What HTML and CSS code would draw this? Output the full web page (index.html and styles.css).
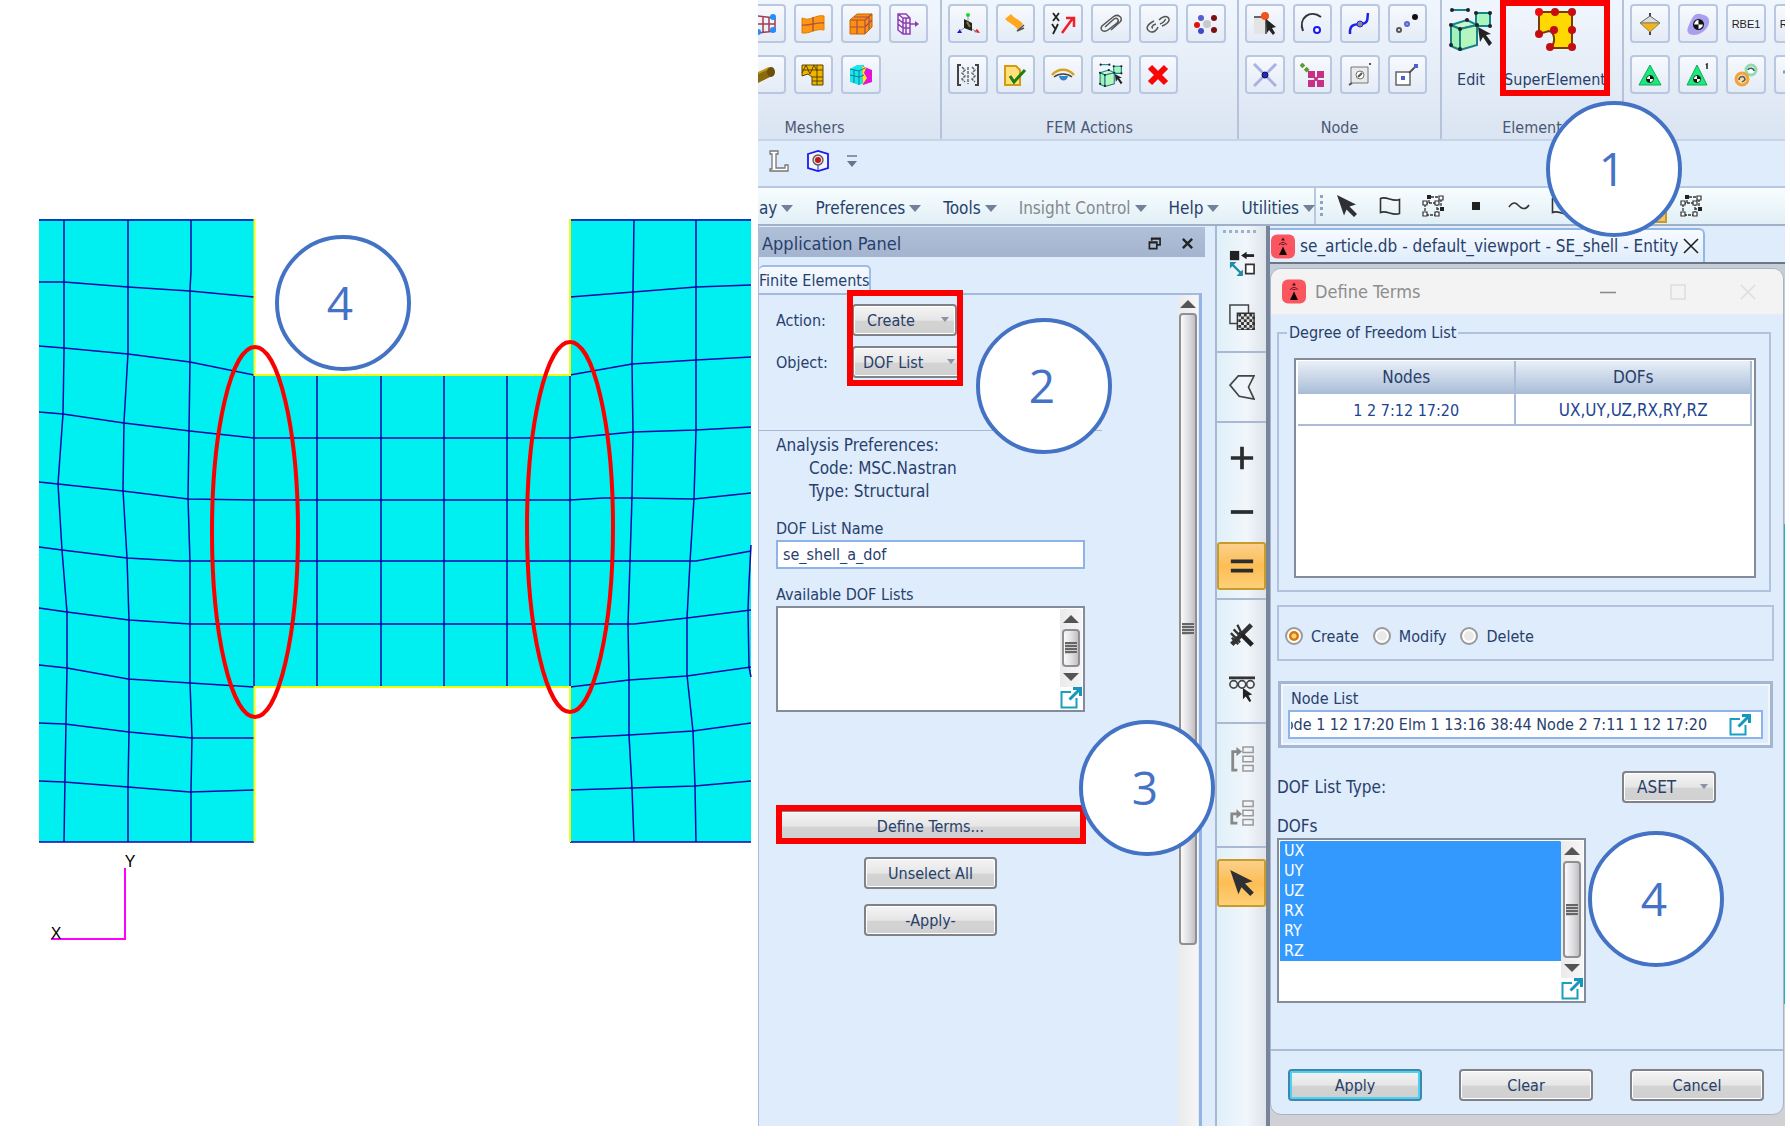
FILE: index.html
```html
<!DOCTYPE html>
<html lang="en">
<head>
<meta charset="utf-8">
<title>Superelement DOF list definition</title>
<link rel="stylesheet" href="styles.css">
</head>
<body>
<svg class="defs" aria-hidden="true">
  <defs>
    <symbol id="popout" viewBox="0 0 22 22"><path d="M11 5H1.500V20.500H16.500V11" fill="none" stroke="#1a9fc0" stroke-width="2"/><path d="M9.500 12.500 19 3M13 1.500h7.500V9" fill="none" stroke="#1597bb" stroke-width="3"/></symbol>
    <symbol id="logo" viewBox="0 0 24 24"><rect width="24" height="24" rx="6" fill="#fb5560"/><path d="M12 3l2 3h-4zM9.500 7.500h5l1.500 3H8z" fill="#4a1216"/><path d="M9 8l6 2M15 8l-6 2" stroke="#fb5560"/><path d="M12 12l4 8.500H8z" fill="#140406"/></symbol>
    <symbol id="cursor" viewBox="0 0 22 22"><path d="M1 0 20 9.500 13.500 11.500 21 19 18 22 10.500 14.500 8 20.500z" fill="#2e3033"/></symbol>
    <symbol id="flag" viewBox="0 0 22 22"><path d="M1.500 3.500c6-3 12 4 19 1v14c-7 3-13-4-19-1z" fill="none" stroke="#333" stroke-width="1.600"/></symbol>
    <symbol id="nodes" viewBox="0 0 22 22"><path d="M3 8h12v12H3zM7 8V2h12v12h-4" fill="none" stroke="#333" stroke-width="1.300" stroke-dasharray="3 1"/><g fill="#fff" stroke="#333" stroke-width="1.200"><path d="M1 6h4v4H1zM13 6h4v4h-4zM1 17h4v4H1zM13 17h4v4h-4zM17 1h4v4h-4z"/></g><path d="M5 0h4v4H5zM18 12h4v4h-4z" fill="#222"/></symbol>
    <symbol id="cell-edit" viewBox="0 0 44 44"><g stroke="#17828a" stroke-width="2"><path d="M2 18 18 13 28 18 11 22z" fill="#c9f7d0"/><path d="M2 18v21l9 4V22z" fill="#a5f0b4"/><path d="M11 22l17-4v20l-17 5z" fill="#b5f5be"/><path d="M27 6h14v13H27z" fill="#a8f5c0"/><path d="M3 3h16"/></g><g fill="#222"><circle cx="2" cy="18" r="2"/><circle cx="18" cy="13" r="2"/><circle cx="28" cy="18" r="2"/><circle cx="11" cy="22" r="2"/><circle cx="2" cy="38" r="2"/><circle cx="11" cy="42" r="2"/><circle cx="27" cy="6" r="2"/><circle cx="41" cy="6" r="2"/><circle cx="41" cy="19" r="2"/><circle cx="3" cy="3" r="2"/><circle cx="19" cy="3" r="2"/><path d="M29 20l13 7-5 1 6 8-3 3-6-9-3 5z"/></g></symbol>
    <symbol id="mass" viewBox="0 0 10 10"><circle cx="5" cy="5" r="4.500" fill="#fff" stroke="#111"/><path d="M5 5V.5A4.500 4.500 0 0 1 9.500 5zM5 5v4.500A4.500 4.500 0 0 1 .5 5z" fill="#111"/></symbol>
  </defs>
</svg>

<main class="page">
  <figure class="mesh">
    <svg class="mesh-plot" viewBox="0 0 758 1136" role="img" aria-label="Shell mesh with the two connection edges circled">
      <path class="shell" d="M39 219H254V375H570V219H751V842H570V687H254V842H39z"/>
      <g class="grid">
        <path d="M39 220H254M570 220H751M39 842H254M570 842H751"/>
        <path d="M64 220V353L63 414 58 484 62 550 66 600 67 612V668L65 777 64 842"/>
        <path d="M128 220V353L124 422 123 490 127 558 129 620V732L128 787V842"/>
        <path d="M191 220V271L190 290V362L189 432 188 498 190 562V683L192 737 191 790V842"/>
        <path d="M254 375V687M317 375V687M381 375V687M444 375V687M507 375V687M570 375V687"/>
        <path d="M634 220 633 292 632 363 633 432 632 497 630 562 628 624 629 680V735L632 788 634 842"/>
        <path d="M696 220V432L694 498 690 562 687 618V675L693 731 695 786 696 842"/>
        <path d="M751 545 749 583 748 610 749 667 751 677"/>
        <path d="M39 282H64L128 287 190 291 254 297M570 297 633 292 696 287 751 285"/>
        <path d="M39 346 64 348 128 354 190 362 254 375M570 375 632 364 696 360 751 357"/>
        <path d="M39 412 63 414 124 423 190 431 254 438H570L633 432 696 430 751 427"/>
        <path d="M39 482 58 484 123 491 188 499 254 500H570L603 498H632L694 499 751 493"/>
        <path d="M39 547 62 550 127 558 180 561H696L751 551"/>
        <path d="M39 608 67 612 129 620 190 624H634L687 618 751 610"/>
        <path d="M39 665 67 668 128 679 190 683 254 687M570 687 629 680 687 676 751 667"/>
        <path d="M39 723 65 724 129 732 192 738H254M570 738 629 735 693 731 751 723"/>
        <path d="M39 781 64 782 128 787 190 792 254 790M570 790 632 788 695 786 751 781"/>
      </g>
      <path class="free-edge" d="M254.500 219V375H570V219M254.500 842V687H570V842"/>
      <path class="axes" d="M125 868V939H51"/>
      <text class="axis-name" x="130" y="867">Y</text>
      <text class="axis-name" x="56" y="939">X</text>
      <ellipse class="ring" cx="255" cy="532" rx="43" ry="185"/>
      <ellipse class="ring" cx="570" cy="527" rx="43" ry="185"/>
      <circle class="step-ring" cx="343" cy="303" r="66"/>
      <text class="step-text" x="340" y="320">4</text>
    </svg>
  </figure>

  <section class="app">
    <header class="ribbon">
      <div class="group group-meshers">
        <div class="tiles tiles-4">
          <button class="tile" aria-label="Mesh surface"><svg viewBox="0 0 24 24"><path d="M3 4l18 2v13L3 21zM3 12h18M9 4v16M15 5v15" fill="none" stroke="#a33c4e" stroke-width="1.500"/><g fill="#1e90ff"><circle cx="19" cy="5" r="3"/><circle cx="19" cy="18" r="3"/><circle cx="4" cy="20" r="3"/></g></svg></button>
          <button class="tile" aria-label="Surface mesh"><svg viewBox="0 0 24 24"><path d="M1 6c8 4 14-4 22-2v14c-8-2-14 4-22 3z" fill="#ff9716" stroke="#e07c00"/><path d="M1 13c8 1 14-3 22-2M12 5v14" fill="none" stroke="#b5553a" stroke-width="1.500"/></svg></button>
          <button class="tile" aria-label="Solid mesh"><svg viewBox="0 0 24 24"><path d="M1 8 8 2h15v13l-7 7H1z" fill="#ff8f0f" stroke="#c46508"/><path d="M1 8h15l7-6M16 8v14M1 15h15l7-7M8 8v14M5 5h15v13" fill="none" stroke="#a3504a" stroke-width="1.200"/></svg></button>
          <button class="tile" aria-label="Sweep"><svg viewBox="0 0 24 24"><g fill="none" stroke="#8e3fb0" stroke-width="1.500"><path d="M2 2h8l4 4v16H7l-5-4zM2 2l5 4h7M7 6v16M2 7l5 4h7M2 12l5 4h7M10 6v16"/><path d="M14 12h7"/></g><path d="M19 9l4 3-4 3z" fill="#8e3fb0"/></svg></button>
          <button class="tile" aria-label="Beam mesh"><svg viewBox="0 0 24 24"><path d="M0 12 15 5c5-1 7 5 3 8L4 20H0z" fill="#8a6a0c"/><path d="M0 12l15-7" stroke="#c09a20" stroke-width="2"/><ellipse cx="17" cy="9" rx="4" ry="5" fill="#6b5108"/></svg></button>
          <button class="tile" aria-label="Mesh on mesh"><svg viewBox="0 0 24 24"><path d="M1 2h21v20H11v-8L7 11l-6 2z" fill="#f0b400" stroke="#5b4600"/><path d="M1 7h21M11 14h11M11 18h11M16 2v20M1 10l4-8 4 9 4-9 3 6" fill="none" stroke="#5b4600"/></svg></button>
          <button class="tile" aria-label="Hex mesh"><svg viewBox="0 0 24 24"><path d="M1 6l7-4h7l1 18-6 2-9-3z" fill="#17e6ee"/><path d="M13 3l10 4v12l-9 3z" fill="#e312d8"/><path d="M13 3l4 2-2 5 3 5-4 6z" fill="#f6ea17"/><path d="M1 6l9 2 6-3M10 8v14M1 12l9 2 5-2M5 7v13" fill="none" stroke="#117c8a"/></svg></button>
        </div>
        <span class="group-name">Meshers</span>
      </div>
      <div class="group group-fem">
        <div class="tiles tiles-6">
          <button class="tile" aria-label="Coordinate frame"><svg viewBox="0 0 24 24"><path d="M8 7l8 4v8l-8-3z" fill="#222"/><path d="M11 10l3 5" stroke="#887c30" stroke-width="2"/><circle cx="12" cy="3" r="2" fill="#15d827"/><path d="M1 21l3-4 2 4z" fill="#1414e6"/><path d="M18 20l3-3 3 4z" fill="#e81414"/><path d="M12 4v5M8 16l-4 3M16 17l5 3" stroke="#999"/></svg></button>
          <button class="tile" aria-label="Flag"><svg viewBox="0 0 24 24"><path d="M2 7 8 2c5 6 8 5 12 10l-5 6C11 12 7 12 2 7z" fill="#ffa81f"/><path d="M21 13l-7 6 7-3" fill="none" stroke="#555" stroke-width="1.500"/></svg></button>
          <button class="tile" aria-label="Renumber axes"><svg class="wide" viewBox="0 0 28 24"><path d="M4 1l6 8M10 1 4 9M3 12l4 6M9 12l-5 10" fill="none" stroke="#222" stroke-width="1.800"/><path d="M13 21 24 6M17 6h8v9" fill="none" stroke="#f0202a" stroke-width="2.500"/></svg></button>
          <button class="tile" aria-label="Associate"><svg viewBox="0 0 24 24"><path d="M6 15 15 7c3-2 6 1 3 4L9 18c-4 3-9 0-6-4L14 5c5-4 11 1 7 5l-9 8" fill="none" stroke="#555" stroke-width="1.500"/></svg></button>
          <button class="tile" aria-label="Disassociate"><svg viewBox="0 0 24 24"><path d="M8 9c-8 4-8 8-5 10 4 3 8-1 9-4M10 12c-4 1-5 4-3 4M13 8c5-5 9-4 10-1 1 3-4 6-7 7M14 12c3-1 6-4 5-5" fill="none" stroke="#555" stroke-width="1.500"/></svg></button>
          <button class="tile" aria-label="Equivalence"><svg viewBox="0 0 24 24"><circle cx="7" cy="6" r="3" fill="#5560c8"/><circle cx="3" cy="13" r="3" fill="#e01010"/><circle cx="7" cy="19" r="3" fill="#4148c8"/><circle cx="13" cy="12" r="4" fill="#c9c9c9"/><circle cx="20" cy="6" r="3" fill="#7b1010"/><circle cx="20" cy="18" r="3" fill="#7b1010"/></svg></button>
          <button class="tile" aria-label="Optimize matrix"><svg viewBox="0 0 24 24"><path d="M5 2H2v20h3M19 2h3v20h-3" fill="none" stroke="#444" stroke-width="2"/><path d="M6 4l3 3-3 3 3 3-3 3 3 3M16 4l3 3-3 3 3 3-3 3 3 3M12 4v17" fill="none" stroke="#666" stroke-width="1.500" stroke-dasharray="3 1"/></svg></button>
          <button class="tile" aria-label="Verify"><svg viewBox="0 0 24 24"><path d="M2 3h11l4 4v15H2z" fill="#ffe07a" stroke="#d29b12" stroke-width="2"/><path d="M7 13l4 6L22 7" fill="none" stroke="#1d7d10" stroke-width="3"/></svg></button>
          <button class="tile" aria-label="Show"><svg viewBox="0 0 24 24"><path d="M1 12c6-7 16-7 22 0" fill="none" stroke="#d9a21e" stroke-width="2.500"/><path d="M3 14c5-4 13-4 18 0" fill="none" stroke="#444" stroke-width="1.500"/><path d="M8 13h9c-1 6-8 6-9 0z" fill="#3484c8"/></svg></button>
          <button class="tile" aria-label="Modify"><svg viewBox="0 0 44 44"><use href="#cell-edit"/></svg></button>
          <button class="tile" aria-label="Delete"><svg viewBox="0 0 24 24"><path d="M4 4l16 16M20 4 4 20" stroke="#fb0505" stroke-width="6"/></svg></button>
        </div>
        <span class="group-name">FEM Actions</span>
      </div>
      <div class="group group-node">
        <div class="tiles tiles-4">
          <button class="tile" aria-label="Edit node"><svg viewBox="0 0 24 24"><path d="M1 5h12v17H1z" fill="#e4e4e4"/><path d="M1 5h12v17" fill="none" stroke="#666" stroke-width="2"/><circle cx="12" cy="4" r="4" fill="#f4511e"/><path d="M13 7l10 8-4 1 3 5-2 2-4-5-2 3z" fill="#222"/></svg></button>
          <button class="tile" aria-label="Arc center"><svg viewBox="0 0 24 24"><path d="M3 19C-2 6 10-3 21 5" fill="none" stroke="#333" stroke-width="2"/><circle cx="17" cy="18" r="3" fill="#fff" stroke="#1818f0" stroke-width="2"/></svg></button>
          <button class="tile" aria-label="Extract"><svg viewBox="0 0 24 24"><path d="M2 22c-1-12 8-9 12-10 7-1 5-6 6-11" fill="none" stroke="#2020e8" stroke-width="2.500"/><circle cx="12" cy="12" r="3" fill="#889" stroke="#2020e8"/></svg></button>
          <button class="tile" aria-label="Interpolate"><svg viewBox="0 0 24 24"><circle cx="4" cy="18" r="2" fill="#fff" stroke="#555" stroke-width="2"/><circle cx="12" cy="12" r="2" fill="#aab" stroke="#5a66d8" stroke-width="2"/><circle cx="20" cy="5" r="3" fill="#111"/></svg></button>
          <button class="tile" aria-label="Intersect"><svg viewBox="0 0 24 24"><path d="M1 1l22 22M23 1 1 23" stroke="#aab2e2" stroke-width="3"/><circle cx="12" cy="12" r="3" fill="#2222ee" stroke="#112"/></svg></button>
          <button class="tile" aria-label="Offset"><svg viewBox="0 0 24 24"><path d="M1 1l9 9" stroke="#5a9a30" stroke-width="4" stroke-dasharray="4 2"/><path d="M8 8h7v7H8zM17 8h7v7h-7zM8 17h7v7H8zM17 17h7v7h-7z" fill="#c83086"/><path d="M10 10l12 12M22 10 10 22" stroke="#c83086" stroke-width="2"/></svg></button>
          <button class="tile" aria-label="Pierce"><svg viewBox="0 0 24 24"><path d="M3 4h17v16H3z" fill="#e9e9e9" stroke="#777"/><path d="M22 0v2M1 22l3-2" stroke="#555" stroke-width="2"/><circle cx="12" cy="12" r="4" fill="#fff" stroke="#777"/><path d="M10 14l4-4" stroke="#555" stroke-width="2"/></svg></button>
          <button class="tile" aria-label="Project"><svg viewBox="0 0 24 24"><path d="M1 9h14v13H1z" fill="#fff" stroke="#666" stroke-width="1.500"/><path d="M14 10l8-8" stroke="#555" stroke-width="2"/><path d="M6 13h4v4H6zM19 1h4v4h-4z" fill="#5060d0"/></svg></button>
        </div>
        <span class="group-name">Node</span>
      </div>
      <div class="group group-element">
        <div class="big-tiles">
          <button class="big-tile"><svg viewBox="0 0 44 44"><use href="#cell-edit"/></svg>Edit</button>
          <button class="big-tile"><svg viewBox="0 0 44 44"><path d="M6 5h33v36H17c7-6 4-16-1-17L6 27z" fill="#ffd800" stroke="#7a3a00" stroke-width="2"/><g fill="#c40d12"><circle cx="6" cy="5" r="4" fill="#f00d12"/><circle cx="22" cy="5" r="4"/><circle cx="39" cy="5" r="4"/><circle cx="39" cy="23" r="4"/><circle cx="39" cy="40" r="4"/><circle cx="17" cy="40" r="4"/><circle cx="21" cy="23" r="4"/><circle cx="6" cy="27" r="4"/></g></svg>SuperElement</button>
        </div>
        <span class="group-name">Element</span>
      </div>
      <div class="group group-mpc">
        <div class="tiles tiles-more">
          <button class="tile" aria-label="Point element"><svg viewBox="0 0 24 24"><path d="M12 1v22" stroke="#444" stroke-width="2"/><path d="M2 11l10-7 10 7z" fill="#ddd" stroke="#666"/><path d="M2 11h20l-10 9z" fill="#f4b31c" stroke="#886"/></svg></button>
          <button class="tile" aria-label="Mass"><svg viewBox="0 0 24 24"><path d="M3 13C6 6 8 1 14 2s10 3 9 9-8 12-15 12-8-5-5-10z" fill="#a8a0ee"/><use href="#mass" x="7" y="7" width="11" height="11"/></svg></button>
          <button class="tile rbe">RBE1</button>
          <button class="tile rbe">RBE2</button>
          <button class="tile" aria-label="Mass element"><svg viewBox="0 0 24 24"><path d="M12 2l11 20H1z" fill="#18ea7c" stroke="#15a85a"/><use href="#mass" x="8" y="12" width="8" height="8"/></svg></button>
          <button class="tile" aria-label="Mass element 1"><svg viewBox="0 0 24 24"><path d="M11 2l10 20H1z" fill="#18ea7c" stroke="#15a85a"/><use href="#mass" x="7" y="12" width="8" height="8"/><path d="M20 2l1-1v5" fill="none" stroke="#222" stroke-width="1.500"/></svg></button>
          <button class="tile" aria-label="Link"><svg viewBox="0 0 24 24"><circle cx="17" cy="7" r="5" fill="#fff" stroke="#8fdcae" stroke-width="3"/><circle cx="8" cy="16" r="6" fill="#ffd9a0" stroke="#f2a33a" stroke-width="3"/><path d="M14 7c1-3 6-2 6 1M5 17c0-4 6-5 6 0M11 17l-3 2" fill="none" stroke="#456" stroke-width="1.500"/></svg></button>
          <button class="tile" aria-label="Add link"><svg viewBox="0 0 24 24"><path d="M1 9h10M6 4v10" stroke="#7d9cb8" stroke-width="3"/></svg></button>
        </div>
      </div>
    </header>

    <div class="quick-bar">
      <svg class="i22" viewBox="0 0 22 22"><path d="M2 1h8v3H8v14h9v-3h3v6H2v-2h2V4H2z" fill="#fff" stroke="#777" stroke-width="1.300"/></svg>
      <svg class="i22" viewBox="0 0 22 22"><path d="M1 4 11 1l10 3v14l-10 3-10-3z" fill="#f4f6ff" stroke="#1a1af2" stroke-width="1.800"/><path d="M11 15v6" stroke="#1a1af2"/><circle cx="11" cy="10" r="5" fill="#ddd" stroke="#555" stroke-width="1.300"/><circle cx="11" cy="10" r="3" fill="#c8141a"/></svg>
      <svg class="more" viewBox="0 0 12 14"><path d="M1 2h10" stroke="#8a95a8" stroke-width="2"/><path d="M1 7h10l-5 6z" fill="#67758c"/></svg>
    </div>

    <nav class="menu-bar">
      <div class="menus">
        <button class="menu">ay</button>
        <button class="menu">Preferences</button>
        <button class="menu">Tools</button>
        <button class="menu muted">Insight Control</button>
        <button class="menu">Help</button>
        <button class="menu">Utilities</button>
      </div>
      <div class="pickers">
        <span class="grip-v"></span>
        <svg class="i22"><use href="#cursor"/></svg>
        <svg class="i22"><use href="#flag"/></svg>
        <svg class="i22"><use href="#nodes"/></svg>
        <svg class="i22" viewBox="0 0 22 22"><path d="M7 7h8v8H7z" fill="#222"/></svg>
        <svg class="i22" viewBox="0 0 22 22"><path d="M1 12c5-7 8-3 10-1s6 5 10-1" fill="none" stroke="#333" stroke-width="1.600"/></svg>
        <svg class="i22"><use href="#flag"/></svg>
        <svg class="i22"><use href="#nodes"/></svg>
        <span class="picked"></span>
        <svg class="i22"><use href="#nodes"/></svg>
      </div>
    </nav>

    <div class="workspace">
      <aside class="panel">
        <div class="panel-title">
          <h2>Application Panel</h2>
          <svg viewBox="0 0 14 14"><path d="M4 4V1.500h9v7h-3M4 2h9M1.500 5.500h8v7h-8zM1 6h9" fill="none" stroke="#222" stroke-width="1.800"/></svg>
          <svg viewBox="0 0 14 14"><path d="M2 2l10 10M12 2 2 12" stroke="#222" stroke-width="2.500"/></svg>
        </div>
        <div class="panel-tabs"><button class="panel-tab">Finite Elements</button></div>
        <div class="panel-page">
          <form class="panel-form">
            <div class="pick-row"><label for="action">Action:</label><span class="drop drop-action"><select id="action"><option>Create</option></select></span></div>
            <div class="pick-row"><label for="object">Object:</label><span class="drop drop-object"><select id="object"><option>DOF List</option></select></span></div>
            <hr>
            <p>Analysis Preferences:</p>
            <p class="indent">Code: MSC.Nastran</p>
            <p class="indent">Type: Structural</p>
            <label class="field-name" for="list-name">DOF List Name</label>
            <input class="text-box" id="list-name" value="se_shell_a_dof">
            <label class="field-name" for="lists">Available DOF Lists</label>
            <div class="list-box lists-box">
              <select id="lists" multiple></select>
              <div class="list-side"><span class="bar"><i class="up"></i><i class="thumb"></i><i class="down"></i></span><svg class="i22"><use href="#popout"/></svg></div>
            </div>
            <button type="button" class="push define">Define Terms...</button>
            <button type="button" class="push mid">Unselect All</button>
            <button type="button" class="push mid">-Apply-</button>
          </form>
          <div class="bar panel-bar"><i class="up"></i><i class="thumb"></i></div>
        </div>
      </aside>

      <div class="tool-strip">
        <span class="grip-h"></span>
        <div class="tools tools-first">
          <button class="tool" aria-label="Swap"><svg viewBox="0 0 28 28"><path d="M1 1h10v10H1z" fill="#222"/><path d="M18 15.500h9v10h-9z" fill="#fff" stroke="#333" stroke-width="1.800"/><path d="M27 6H16" stroke="#222" stroke-width="3"/><path d="M13 6l6-4v8z" fill="#222"/><path d="M4 16l9 9" stroke="#1f8ba5" stroke-width="2.500"/><path d="M1 13h7l-7 7zM15 28H8l7-7z" fill="#1f8ba5"/></svg></button>
          <button class="tool" aria-label="Overlap"><svg viewBox="0 0 28 28"><path d="M1 1h20v20H1z" fill="none" stroke="#444" stroke-width="1.600"/><path d="M9 10h18v18H9z" fill="#e4e4e4" stroke="#333" stroke-width="1.500"/><path d="M10 12h18M10 18h18M10 24h18" stroke="#333" stroke-width="3" stroke-dasharray="3 3"/><path d="M13 15h15M13 21h15M13 27h15" stroke="#333" stroke-width="3" stroke-dasharray="3 3"/></svg></button>
        </div>
        <div class="tools tools-one">
          <button class="tool" aria-label="Polygon"><svg viewBox="0 0 28 28"><path d="M10 2h17l-6 12 6 13-16-3L1 12z" fill="none" stroke="#444" stroke-width="1.800"/></svg></button>
        </div>
        <div class="tools tools-three">
          <button class="tool" aria-label="Add"><svg viewBox="0 0 28 28"><path d="M14 2v24M2 14h24" stroke="#2a2c2e" stroke-width="4"/></svg></button>
          <button class="tool" aria-label="Remove"><svg viewBox="0 0 28 28"><path d="M2 14h24" stroke="#2a2c2e" stroke-width="4"/></svg></button>
          <button class="tool on" aria-label="Equal"><svg viewBox="0 0 28 28"><path d="M2 9h24M2 19h24" stroke="#2a2c2e" stroke-width="4"/></svg></button>
        </div>
        <div class="tools">
          <button class="tool" aria-label="Clear"><svg viewBox="0 0 28 28"><path d="M3 24 24 3" stroke="#333" stroke-width="5"/><path d="M11 11l14 14" stroke="#222" stroke-width="5"/><path d="M2 12l10 10M5 8l8 8M9 3l5 10M3 17l7 7" stroke="#333" stroke-width="2.500"/></svg></button>
          <button class="tool" aria-label="Pick list"><svg viewBox="0 0 28 28"><path d="M0 2h28" stroke="#333" stroke-width="3"/><g fill="none" stroke="#444" stroke-width="1.800"><circle cx="5" cy="9" r="4"/><circle cx="14" cy="9" r="4"/><circle cx="23" cy="9" r="4"/></g><path d="M15 13l10 7-4 1 3 6-2 1-4-6-3 3z" fill="#222"/></svg></button>
        </div>
        <div class="tools">
          <button class="tool" aria-label="Insert first"><svg viewBox="0 0 28 28"><g fill="none" stroke="#999" stroke-width="1.600"><path d="M15 1h11v6H15zM15 11h11v6H15zM15 21h11v6H15z"/></g><path d="M9 26H4V6h6" fill="none" stroke="#888" stroke-width="3"/><path d="M8 1l6 5-6 5z" fill="#888"/></svg></button>
          <button class="tool" aria-label="Insert middle"><svg viewBox="0 0 28 28"><g fill="none" stroke="#999" stroke-width="1.600"><path d="M15 1h11v6H15zM15 11h11v6H15zM15 21h11v6H15z"/></g><path d="M9 25H3V15h7" fill="none" stroke="#888" stroke-width="3"/><path d="M8 10l6 5-6 5z" fill="#888"/></svg></button>
        </div>
        <div class="tools tools-last">
          <button class="tool on" aria-label="Select"><svg><use href="#cursor"/></svg></button>
        </div>
      </div>

      <section class="viewport">
        <div class="doc-tabs">
          <div class="doc-tab"><svg class="logo"><use href="#logo"/></svg><span>se_article.db - default_viewport - SE_shell - Entity</span><svg class="close" viewBox="0 0 16 16"><path d="M1 1l14 14M15 1 1 15" stroke="#222" stroke-width="1.600"/></svg></div>
        </div>
        <div class="canvas">
          <form class="dialog">
            <div class="dialog-title">
              <svg class="logo"><use href="#logo"/></svg>
              <h2>Define Terms</h2>
              <svg class="win" viewBox="0 0 16 16"><path d="M0 8.500h16" stroke="#888" stroke-width="1.500"/></svg>
              <svg class="win" viewBox="0 0 16 16"><path d="M1 1h14v14H1z" fill="none" stroke="#ddd" stroke-width="1.500"/></svg>
              <svg class="win" viewBox="0 0 16 16"><path d="M1 1l14 14M15 1 1 15" stroke="#ddd" stroke-width="1.500"/></svg>
            </div>
            <div class="dialog-body">
              <fieldset class="dof-set">
                <legend>Degree of Freedom List</legend>
                <div class="table-box">
                  <table>
                    <thead><tr><th>Nodes</th><th>DOFs</th></tr></thead>
                    <tbody><tr><td>1 2 7:12 17:20</td><td>UX,UY,UZ,RX,RY,RZ</td></tr></tbody>
                  </table>
                </div>
              </fieldset>
              <div class="modes">
                <label><input type="radio" name="mode" checked>Create</label>
                <label><input type="radio" name="mode">Modify</label>
                <label><input type="radio" name="mode">Delete</label>
              </div>
              <div class="node-frame">
                <label for="node-list">Node List</label>
                <div class="text-box node-box"><input id="node-list" value="Node 1 12 17:20 Elm 1 13:16 38:44 Node 2 7:11 1 12 17:20"><svg class="i22"><use href="#popout"/></svg></div>
              </div>
              <div class="type-row"><label for="list-type">DOF List Type:</label><span class="drop drop-type"><select id="list-type"><option>ASET</option></select></span></div>
              <label class="dofs-name" for="dofs">DOFs</label>
              <div class="list-box dofs-box">
                <select id="dofs" multiple>
                  <option selected>UX</option><option selected>UY</option><option selected>UZ</option><option selected>RX</option><option selected>RY</option><option selected>RZ</option>
                </select>
                <div class="list-side"><span class="bar"><i class="up"></i><i class="thumb"></i><i class="down"></i></span><svg class="i22"><use href="#popout"/></svg></div>
              </div>
            </div>
            <div class="dialog-actions">
              <button type="button" class="push default">Apply</button>
              <button type="button" class="push">Clear</button>
              <button type="button" class="push">Cancel</button>
            </div>
          </form>
        </div>
      </section>
    </div>

    <span class="mark mark-super"></span>
    <span class="mark mark-action"></span>
    <span class="mark mark-define"></span>
    <span class="step step-1">1</span>
    <span class="step step-2">2</span>
    <span class="step step-3">3</span>
    <span class="step step-4">4</span>
  </section>
</main>
</body>
</html>
```
FILE: styles.css
```css
* { box-sizing: border-box; }
body { margin: 0; background: #fff; color: #27406b; font: 16px/23px "DejaVu Sans Condensed", "DejaVu Sans", sans-serif; }
h2, p, figure { margin: 0; font-size: 17px; font-weight: 400; }
h2 { font-size: 18px; }
svg { display: block; flex: none; }
button, select, input { font: inherit; color: inherit; margin: 0; padding: 0; }
button { border: 0; background: none; white-space: nowrap; }
.defs { position: absolute; width: 0; height: 0; }
.i22 { width: 22px; height: 22px; }

.page { display: grid; grid-template-columns: minmax(0, 758fr) minmax(0, 1027fr); padding: 0 5px 10px 0; min-height: 100vh; }

/* mesh plot */
.mesh-plot { width: 100%; margin-bottom: -10px; }
.shell { fill: #00eff0; }
.grid { fill: none; stroke: #0707a8; stroke-width: 1.5; }
.free-edge { fill: none; stroke: #f4fa10; stroke-width: 2; }
.axes { fill: none; stroke: #f0f; stroke-width: 2; }
.axis-name { font: 16px "Liberation Sans", sans-serif; text-anchor: middle; }
.ring { fill: none; stroke: #fb0000; stroke-width: 4; }
.step-ring { fill: #fff; stroke: #4472c4; stroke-width: 4; }
.step-text { font: 46px "Open Sans", sans-serif; fill: #4472c4; text-anchor: middle; }

.app { position: relative; display: flex; flex-direction: column; background: #dfecfc; }

/* ribbon */
.ribbon { display: flex; height: 141px; background: linear-gradient(#f0f6fd, #dae4f2); border-bottom: 2px solid #c8d5e7; overflow: hidden; }
.group { flex: none; display: flex; flex-direction: column; justify-content: space-between; align-items: flex-start; padding: 4px 6px 0; border-right: 2px solid #b5c3da; overflow: hidden; color: #4b5873; }
.group-name { align-self: center; }
/* the left part of this group is scrolled out of the window */
.group-meshers { width: 253px; margin-left: -69px; align-items: flex-end; }
.group-meshers .tiles { margin-right: 6px; }
.group-fem { width: 297px; }
.group-node { width: 203px; }
.group-element { width: 182px; padding: 4px 0 0; }
.group-mpc { flex: 1; border: 0; }
.tiles { display: grid; gap: 12px 8px; grid-auto-rows: 39px; flex: none; }
.tiles-4 { grid-template-columns: repeat(4, 1fr); width: 182px; }
.tiles-6 { grid-template-columns: repeat(6, 1fr); width: 278px; }
.tiles-more { grid-template-columns: repeat(4, 40px); }
.tile { display: grid; place-items: center; border: 2px solid #b9c8e0; border-radius: 4px; background: linear-gradient(#f7fafe, #e3ebf6); }
.tile svg { width: 24px; height: 24px; }
.tile svg.wide { width: 28px; }
.rbe { font: 11px "Liberation Sans", sans-serif; color: #222; }
.big-tiles { display: flex; align-self: stretch; gap: 4px; }
.big-tile { display: flex; flex-direction: column; align-items: center; gap: 17px; padding-top: 3px; color: #27406b; }
.big-tile svg { width: 44px; height: 44px; }
.big-tile:first-child { width: 58px; }
.big-tile:last-child { width: 102px; }

.quick-bar { display: flex; align-items: center; gap: 17px; height: 47px; padding: 0 10px 6px; border-bottom: 2px solid #b8c8e0; }
.more { width: 12px; height: 14px; }

.menu-bar { display: flex; height: 38px; background: linear-gradient(#f8fdff, #e1eff6); border-bottom: 2px solid #9fb0c8; font-size: 17px; }
.menus { display: flex; align-items: center; gap: 22px; width: 558px; padding: 4px 0 0 1px; border-right: 2px solid #b8c8e0; }
.menu { display: flex; align-items: center; gap: 4px; }
.menu::after { content: ""; border: 6px solid transparent; border-top: 7px solid #71809b; border-bottom: 0; }
.menu.muted { color: #85898f; }
.pickers { flex: 1; display: flex; align-items: center; gap: 21px; padding-left: 4px; overflow: hidden; }
.grip-v { width: 3px; height: 22px; margin-right: -8px; background: repeating-linear-gradient(#8fa3c4 0 3px, transparent 3px 6px); }
.picked { width: 30px; height: 34px; margin-right: -8px; background: #fbc35f; border: 2px solid #c79a2c; }

/* application panel */
.workspace { flex: 1; display: flex; }
.panel { width: 457px; display: flex; flex-direction: column; border-left: 1px solid #a9bedf; }
.panel-title { display: flex; align-items: center; gap: 20px; height: 30px; margin: 1px 10px 0 0; padding: 3px 11px 0 3px; background: linear-gradient(#b0c0d9, #a4b4ce); }
.panel-title h2 { flex: 1; }
.panel-title svg { width: 13px; height: 13px; }
.panel-tabs { height: 36px; padding-top: 8px; }
.panel-tab { height: 28px; border: 2px solid #9fbce6; border-width: 2px 2px 0 0; border-radius: 5px 5px 0 0; background: linear-gradient(#f6faff, #e3eefc); }
.panel-page { flex: 1; display: flex; justify-content: space-between; margin-right: 13px; border-top: 2px solid #a3b9de; border-right: 3px solid #94b2e2; }
.panel-form { width: 343px; padding: 9px 0 0 17px; }
.pick-row { display: flex; align-items: center; height: 32px; margin-bottom: 10px; }
.pick-row label { width: 76px; }
.panel-form hr { margin: 52px 0 3px -17px; border: 0; border-top: 1px solid #a7b7d2; }
.indent { padding-left: 33px; }
.field-name { display: block; margin-top: 14px; }
.text-box { display: block; width: 309px; height: 29px; padding: 0 5px; border: 2px solid #8fb2e8; background: #fff; }
.lists-box { width: 309px; height: 106px; }
.define { width: 309px; margin-top: 98px; }
.mid { display: block; width: 133px; margin: 15px 0 0 88px; }

.push, .drop select { height: 32px; border: 2px solid #7f8287; border-radius: 4px; background: linear-gradient(#f4f4f4, #e6e6e6 50%, #d3d3d3 55%, #d0d0d0); box-shadow: inset 0 0 0 1px #fff; }
.drop { position: relative; }
.drop::after { content: ""; position: absolute; right: 8px; top: 13px; border: 4px solid transparent; border-top: 5px solid #8a93a3; border-bottom: 0; }
.drop select { appearance: none; width: 100%; padding-left: 13px; }
.drop-action { width: 105px; }
.drop-object { width: 111px; }
.drop-object select { padding-left: 9px; }

.list-box { display: flex; border: 2px solid #848c9a; background: #fff; padding: 1px; }
.list-box select { flex: 1; min-width: 0; border: 0; outline: 0; overflow: hidden; background: #fff; }
.list-side { width: 22px; display: flex; flex-direction: column; }
.bar { flex: 1; display: flex; flex-direction: column; align-items: center; background: linear-gradient(90deg, #eaeaea, #f6f6f6); }
.up, .down { border: 8px solid transparent; }
.up { border-top: 0; border-bottom: 8px solid #555; margin: 6px 0; }
.down { border-bottom: 0; border-top: 8px solid #555; margin: 6px 0; }
.thumb { flex: 1; width: 18px; border: 2px solid #8f8f94; border-radius: 4px; background: repeating-linear-gradient(#666 0 2px, #ccc 2px 3px) center / 12px 12px no-repeat, linear-gradient(90deg, #fafafa, #dcdce0 60%, #bfbfc4); }
.panel-bar { flex: none; width: 20px; margin-right: 1px; }
.panel-bar .up { margin: 5px 0; }
.panel-bar .thumb { flex: none; height: 632px; }

/* tool strip */
.tool-strip { width: 51px; border-left: 2px solid #a9b9d4; background: linear-gradient(90deg, #dff0f8, #f1f6fb 60%, #dfe3ea); }
.grip-h { display: block; height: 3px; margin: 4px 10px 0 6px; background: repeating-linear-gradient(90deg, #9fb0cc 0 3px, transparent 3px 6px); }
.tools { display: flex; flex-direction: column; gap: 6px; padding: 11px 0 9px; border-bottom: 2px solid #a9b9d4; }
.tools-first { padding: 6px 0 10px; }
.tools-one { padding: 10px 0; }
.tools-three { padding: 11px 0 8px; }
.tools-last { border: 0; }
.tool { display: grid; place-items: center; width: 49px; height: 48px; }
.tool svg { width: 26px; height: 26px; }
.tool.on { border: 2px solid #c99c2a; border-radius: 3px; background: linear-gradient(#fbd08c, #fdbd54 50%, #fdd078); }

/* viewport and dialog */
.viewport { flex: 1; min-width: 0; display: flex; flex-direction: column; border-left: 4px solid #76859c; }
.doc-tabs { height: 38px; padding-top: 2px; border-bottom: 2px solid #6d7681; }
.doc-tab { display: inline-flex; align-items: center; gap: 5px; height: 34px; padding: 0 4px 0 1px; border: 2px solid #8fb8e8; border-left: 0; border-bottom: 0; border-radius: 0 6px 0 0; background: linear-gradient(#f8fbff, #dfecfc); white-space: nowrap; font-size: 17px; }
.logo { width: 24px; height: 25px; }
.close { width: 16px; height: 16px; }
.canvas { flex: 1; padding: 4px 1px 11px 0; background: linear-gradient(#c5cdd8 0 260px, #19b8bc 260px 740px, #cfd1d4 740px); }
.dialog { display: flex; flex-direction: column; height: 100%; border: 1px solid #a9b3c2; border-radius: 11px; background: #dfecfc; overflow: hidden; }
.dialog-title { display: flex; align-items: center; height: 45px; padding: 0 27px 0 11px; background: #f3f3f3; color: #8d8d8d; }
.dialog-title h2 { flex: 1; padding-left: 9px; }
.win { width: 16px; height: 16px; margin-left: 54px; }
.dialog-body { flex: 1; padding: 7px 9px 0 6px; font-size: 17px; }
.dof-set { margin: 0 3px 0 0; padding: 14px 13px 12px 15px; border: 2px solid #b2c2dc; }
.dof-set legend { padding: 0 2px; margin-left: -7px; font-size: 16px; }
.table-box { height: 220px; padding: 1px 2px; border: 2px solid #848c9a; background: #fff; }
table { width: 100%; border-collapse: collapse; table-layout: fixed; }
th, td { height: 32px; padding: 2px 0 0; border-right: 2px solid #a9bcd8; border-bottom: 2px solid #a9bcd8; font-weight: 400; text-align: center; }
th:first-child { width: 48%; }
th { background: linear-gradient(#e9eff8, #adc0d9); }
td { color: #1c4590; }
td:first-child { font-size: 16px; }
.modes { display: flex; align-items: center; gap: 14px; height: 56px; margin-top: 13px; padding: 6px 0 0 6px; border: 2px solid #b2c2dc; font-size: 16px; }
.modes label { display: flex; align-items: center; gap: 8px; }
.modes input { appearance: none; width: 18px; height: 18px; border: 2px solid #9a9a9a; border-radius: 50%; background: #e9e9e9; box-shadow: inset 0 0 0 2px #fff; }
.modes input:checked { background: radial-gradient(circle, #ffd27a 0 2px, #d97708 3px 5px, #fff 7px); }
.node-frame { height: 67px; margin: 20px 1px 0; padding: 3px 7px 0; border: 3px solid #a5b6d2; box-shadow: inset 0 0 0 2px #f1f6fd; font-size: 16px; }
.node-frame label { display: block; padding-left: 3px; }
.node-box { display: flex; align-items: center; width: auto; padding: 0 10px 0 1px; }
.node-box input { flex: 1; min-width: 0; border: 0; outline: 0; background: none; text-indent: -17px; margin-right: 12px; }
.type-row { display: flex; align-items: center; justify-content: space-between; margin-top: 23px; }
.drop-type { width: 94px; margin-right: 58px; }
.dofs-name { display: block; margin-top: 12px; }
.dofs-box { width: 309px; height: 165px; font-size: 16px; }
.dofs-box option { height: 20px; padding: 0 4px; line-height: 20px; min-height: 0; }
.dofs-box option:checked { background: #3399ff linear-gradient(#3399ff, #3399ff); color: #fff; -webkit-text-fill-color: #fff; }
.dialog-actions { display: flex; justify-content: space-between; height: 65px; padding: 18px 19px 0 17px; border-top: 2px solid #a9bcd8; }
.dialog-actions .push { width: 134px; }
.push.default { border-color: #3d87a8; box-shadow: inset 0 0 0 2px #4cd0f4; }

/* tutorial marks laid over the window */
.mark { position: absolute; border: 6px solid #fb0000; }
.mark-super { left: 742px; top: 0; width: 110px; height: 96px; }
.mark-action { left: 89px; top: 290px; width: 116px; height: 96px; }
.mark-define { left: 18px; top: 805px; width: 310px; height: 39px; }
.step { position: absolute; width: 136px; height: 136px; padding-right: 4px; border: 4px solid #4472c4; border-radius: 50%; background: #fff; color: #4472c4; font: 46px/126px "Open Sans", sans-serif; text-align: center; }
.step-1 { left: 788px; top: 101px; }
.step-2 { left: 218px; top: 318px; }
.step-3 { left: 321px; top: 720px; }
.step-4 { left: 830px; top: 831px; }
```
